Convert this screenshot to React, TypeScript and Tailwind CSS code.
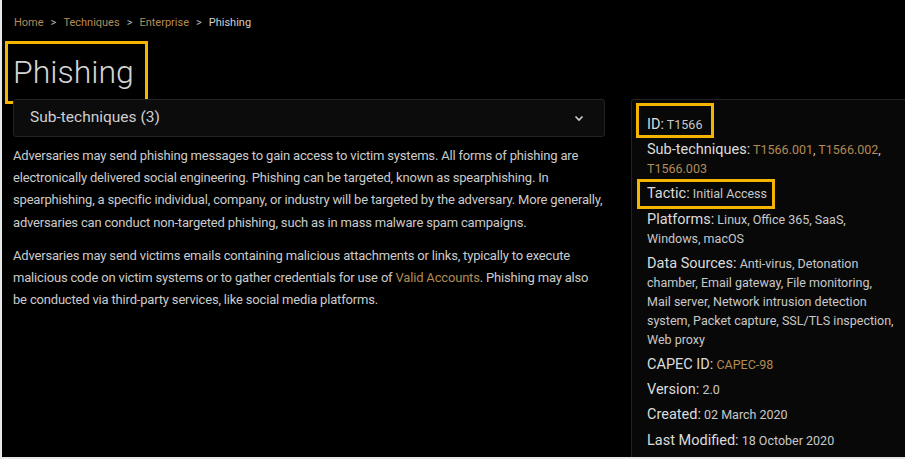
import React from "react";

const link = "text-[#b38b55]";

function Item({ label, children, box }: { label: string; children: React.ReactNode; box?: string }) {
  return (
    <div className="relative">
      {box && <span className={`absolute border-[3px] border-[#f4b400] ${box}`} />}
      <span className="text-[14.5px] leading-[19px] text-[#dcdcdc]">{label}:</span>{" "}
      <span className="text-[12.5px] leading-[19px] text-[#c8c8c8]">{children}</span>
    </div>
  );
}

export default function App() {
  return (
    <div
      className="w-[905px] h-[459px] bg-black overflow-hidden border-l-2 border-b-2 border-[#e8e8e8] flex flex-col"
      style={{ fontFamily: "Roboto, 'Liberation Sans', sans-serif" }}
    >
      <div className="pt-[16px] pl-[12px] text-[11px] leading-[14px] text-[#bdbdbd] flex gap-[7px]">
        <span className={link}>Home</span>
        <span>&gt;</span>
        <span className={link}>Techniques</span>
        <span>&gt;</span>
        <span className={link}>Enterprise</span>
        <span>&gt;</span>
        <span className="text-[#d0d0d0]">Phishing</span>
      </div>
      <div className="relative h-[69px] pl-[11px] pt-[23px]">
        <span className="absolute left-[3px] top-[11px] w-[143px] h-[63px] border-[3px] border-[#f4b400]" />
        <h1 className="text-[32px] leading-[38px] font-light text-[#d4d4d4]">Phishing</h1>
      </div>
      <div className="flex flex-1 min-h-0 pl-[11px] gap-[26px]">
        <div className="w-[592px] flex flex-col">
          <div className="h-[38px] border border-[#232323] bg-[#0c0c0c] rounded-[3px] flex items-center justify-between pl-[16px] pr-[20px] relative z-10">
            <span className="text-[15.5px] text-[#cfcfcf]">Sub-techniques (3)</span>
            <svg width="10" height="7" viewBox="0 0 10 7" fill="none">
              <path d="M1.5 1.5 L5 5 L8.5 1.5" stroke="#d0d0d0" strokeWidth="1.6" />
            </svg>
          </div>
          <p className="mt-[8px] text-[13px] tracking-[-0.18px] leading-[22.2px] text-[#cbcbcb]">
            Adversaries may send phishing messages to gain access to victim systems. All forms of phishing are
            electronically delivered social engineering. Phishing can be targeted, known as spearphishing. In
            spearphishing, a specific individual, company, or industry will be targeted by the adversary. More
            generally, adversaries can conduct non-targeted phishing, such as in mass malware spam campaigns.
          </p>
          <p className="mt-[11px] text-[13px] tracking-[-0.18px] leading-[22.2px] text-[#cbcbcb]">
            Adversaries may send victims emails containing malicious attachments or links, typically to execute
            malicious code on victim systems or to gather credentials for use of{" "}
            <span className={link}>Valid Accounts</span>. Phishing may also be conducted via third-party services,
            like social media platforms.
          </p>
        </div>
        <div className="flex-1 border-l border-t border-[#222] bg-[#080808] rounded-tl-[3px] pl-[15px] pr-[10px] pt-[15px] flex flex-col gap-[6.2px] text-[12.5px] leading-[19px]">
          <Item label="ID" box="-left-[11px] -top-[12px] w-[78px] h-[35px]">
            T1566
          </Item>
          <div>
            <span className="text-[14.5px] leading-[19px] text-[#dcdcdc]">Sub-techniques:</span>{"  "}
            <span className={`text-[12.5px] ${link}`}>T1566.001</span>
            <span className="text-[12.5px] text-[#c8c8c8]">, </span>
            <span className={`text-[12.5px] ${link}`}>T1566.002</span>
            <span className="text-[12.5px] text-[#c8c8c8]">, </span>
            <span className={`text-[12.5px] ${link}`}>T1566.003</span>
          </div>
          <Item label="Tactic" box="-left-[10px] -top-[5px] w-[138px] h-[30px]">
            Initial Access
          </Item>
          <Item label="Platforms">Linux, Office 365, SaaS, Windows, macOS</Item>
          <Item label="Data Sources">
            Anti-virus, Detonation chamber, Email gateway, File monitoring, Mail server, Network intrusion detection
            system, Packet capture, SSL/TLS inspection, Web proxy
          </Item>
          <div>
            <span className="text-[14.5px] leading-[19px] text-[#dcdcdc]">CAPEC ID:</span>{" "}
            <span className={`text-[12.5px] ${link}`}>CAPEC-98</span>
          </div>
          <Item label="Version">2.0</Item>
          <Item label="Created">02 March 2020</Item>
          <Item label="Last Modified">18 October 2020</Item>
        </div>
      </div>
    </div>
  );
}
